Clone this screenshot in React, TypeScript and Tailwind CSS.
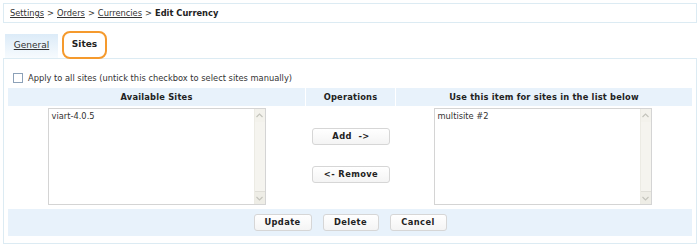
import React from "react";

function ScrollList({ items }: { items: string[] }) {
  return (
    <div className="flex w-[218px] h-[97px] border border-[#d4d4d4] bg-white">
      <div className="flex-1 pl-[3px] pt-[2px] leading-[11px]">
        {items.map((it) => (
          <div key={it}>{it}</div>
        ))}
      </div>
      <div className="w-[11px] flex flex-col justify-between bg-[#f5f4ef] border-l border-[#ecebe4]">
        <div className="h-[13px] flex items-center justify-center bg-[#f3f2ec]">
          <svg width="7" height="5" viewBox="0 0 7 5">
            <path d="M0.5 4 L3.5 1 L6.5 4" fill="none" stroke="#c4c4bc" strokeWidth="1.2" />
          </svg>
        </div>
        <div className="h-[13px] flex items-center justify-center bg-[#eeede6] border-t border-[#e0dfd8]">
          <svg width="7" height="5" viewBox="0 0 7 5">
            <path d="M0.5 1 L3.5 4 L6.5 1" fill="none" stroke="#c4c4bc" strokeWidth="1.2" />
          </svg>
        </div>
      </div>
    </div>
  );
}

function Btn({ children, w }: { children: React.ReactNode; w: string }) {
  return (
    <div
      className={`${w} h-[17px] flex items-center justify-center rounded-[3px] border border-[#d6d6d6] bg-gradient-to-b from-white to-[#f4f4f4] font-bold tracking-[0.4px] text-[#222]`}
    >
      {children}
    </div>
  );
}

export default function App() {
  return (
    <div
      className="w-[700px] h-[246px] bg-white px-[3px] pt-[3px] text-[8.3px] text-[#333]"
      style={{ fontFamily: '"DejaVu Sans", Verdana, sans-serif' }}
    >
      <div className="h-[20px] border border-[#dcebf3] flex items-center pl-[6px]">
        <span className="underline">Settings</span>
        <span className="mx-[3px]">&gt;</span>
        <span className="underline">Orders</span>
        <span className="mx-[3px]">&gt;</span>
        <span className="underline">Currencies</span>
        <span className="mx-[3px]">&gt;</span>
        <span className="font-bold text-[#222]">Edit Currency</span>
      </div>

      <div className="mt-[7px] flex items-end pl-[2px] h-[28px]">
        <div className="w-[53px] h-[24px] flex items-center justify-center bg-gradient-to-b from-[#dcebf8] to-[#f7fbfe] text-[9px]">
          <span className="underline">General</span>
        </div>
        <div className="ml-[4px] w-[45px] h-[28px] flex items-center justify-center rounded-[8px] border-2 border-[#f59a2d] font-bold text-[9px] text-[#222] relative top-[1px] bg-white">
          Sites
        </div>
      </div>

      <div className="h-[186px] border border-[#dcebf3] px-[4px]">
        <div className="mt-[12px] h-[14px] flex items-center pl-[5px]">
          <div className="w-[10px] h-[10px] border border-[#8ca1b8] bg-white" />
          <span className="ml-[5px]">Apply to all sites (untick this checkbox to select sites manually)</span>
        </div>

        <div className="mt-[3px] grid grid-cols-[297px_89px_296px] gap-x-[1px] bg-white h-[18px] font-bold text-[#222] tracking-[0.2px]">
          <div className="bg-[#e8f2fb] flex items-center justify-center">Available Sites</div>
          <div className="bg-[#e8f2fb] flex items-center justify-center">Operations</div>
          <div className="bg-[#e8f2fb] flex items-center justify-center">Use this item for sites in the list below</div>
        </div>

        <div className="grid grid-cols-[297px_90px_297px] h-[103px]">
          <div className="flex justify-center pt-[2px]">
            <ScrollList items={["viart-4.0.5"]} />
          </div>
          <div className="flex flex-col items-center pt-[22px] pl-[2px]">
            <Btn w="w-[78px]">Add&nbsp;&nbsp;-&gt;</Btn>
            <div className="mt-[21px]">
              <Btn w="w-[78px]">&lt;- Remove</Btn>
            </div>
          </div>
          <div className="flex justify-center pt-[2px] pr-[2px]">
            <ScrollList items={["multisite #2"]} />
          </div>
        </div>

        <div className="h-[27px] bg-[#e8f2fb] flex items-center justify-center gap-[11px]">
          <Btn w="w-[58px]">Update</Btn>
          <Btn w="w-[56px]">Delete</Btn>
          <Btn w="w-[57px]">Cancel</Btn>
        </div>
      </div>
    </div>
  );
}
